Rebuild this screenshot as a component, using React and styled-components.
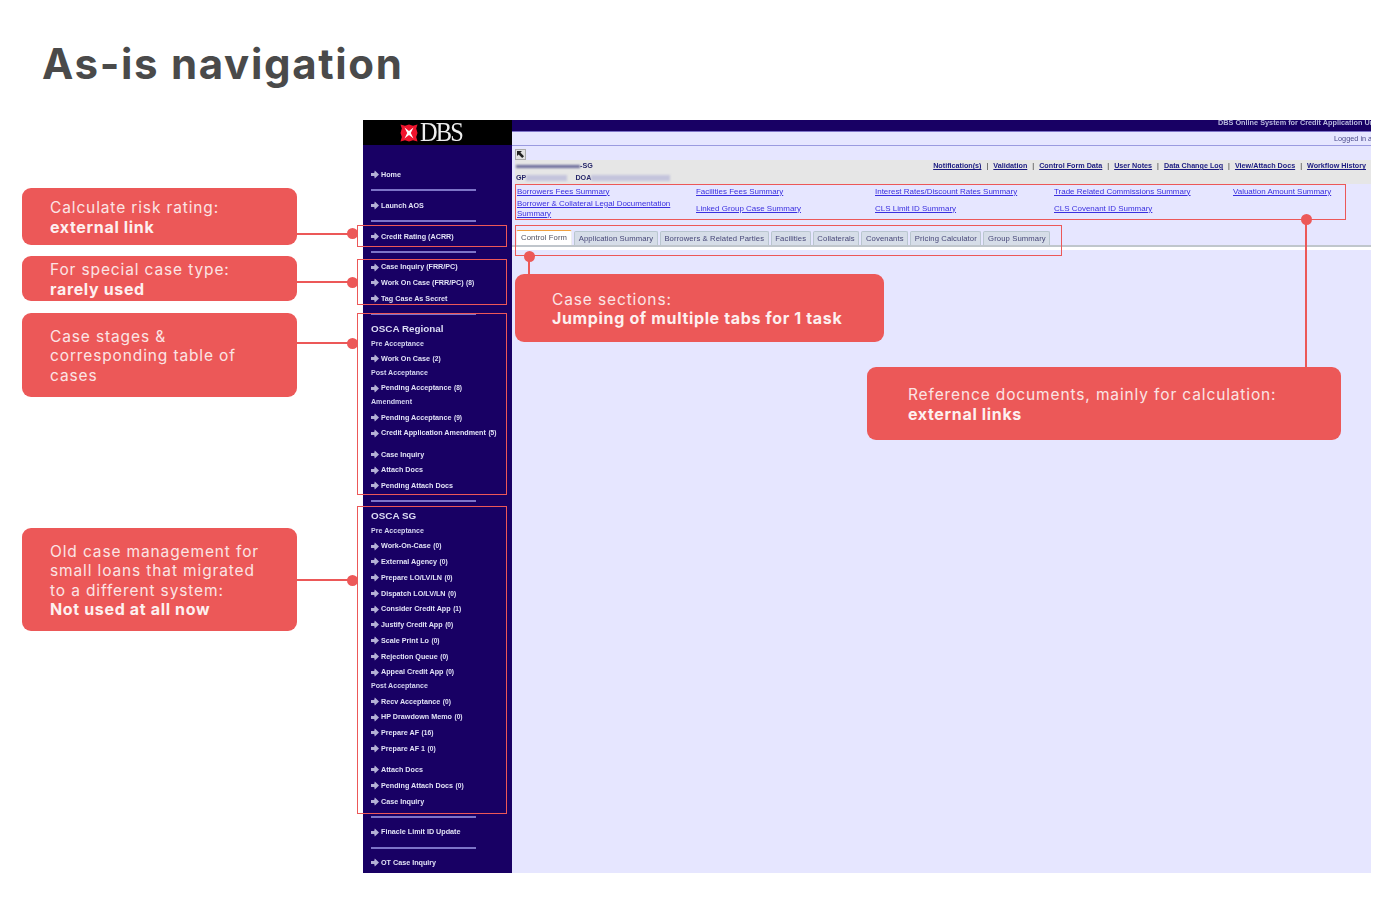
import React from "react";
import styled, { createGlobalStyle } from "styled-components";

const RED = "#ec5858";
const NAVY = "#180064";
const LAV = "#e6e6ff";

const Global = createGlobalStyle`
  html, body { margin: 0; padding: 0; background: #fff; }
  body { width: 1400px; height: 900px; overflow: hidden; font-family: Inter, "Liberation Sans", sans-serif; }
`;

const Page = styled.div`
  width: 1400px;
  height: 900px;
  position: relative;
  background: #fff;
`;
const Title = styled.h1`
  margin: 0;
  padding: 36px 0 0 42px;
  height: 120px;
  box-sizing: border-box;
  font: 700 42px/55px Inter, sans-serif;
  letter-spacing: 1.67px;
  color: #4a4a4a;
`;
const Body = styled.div`
  display: flex;
  align-items: flex-start;
  padding-left: 22px;
`;
const Notes = styled.div`
  width: 341px;
  flex: none;
  display: flex;
  flex-direction: column;
  padding-top: 68px;
`;
const Callout = styled.div`
  position: relative;
  box-sizing: border-box;
  width: 275px;
  height: ${(p) => p.$h}px;
  margin-top: ${(p) => p.$mt || 0}px;
  padding: 2px 0 0 28px;
  display: flex;
  align-items: center;
  background: ${RED};
  border-radius: 9px;
  color: #fbe4e4;
  font: 400 15.5px/19.5px Inter, sans-serif;
  letter-spacing: 0.87px;
  b { font-weight: 700; font-size: 16px; color: #fdf0f0; letter-spacing: 0.65px; }
`;
const Connector = styled.i`
  position: absolute;
  left: 100%;
  top: ${(p) => p.$y}px;
  width: 61px;
  height: 2px;
  background: ${RED};
  &::after {
    content: "";
    position: absolute;
    right: 0;
    top: -4.5px;
    width: 11px;
    height: 11px;
    border-radius: 50%;
    background: ${RED};
  }
`;
const Stage = styled.div`
  position: relative;
  width: 1008px;
  height: 753px;
  flex: none;
`;
const Shot = styled.div`
  width: 100%;
  height: 100%;
  display: flex;
  overflow: hidden;
  background: ${LAV};
  filter: blur(0.5px);
  font-family: "Liberation Sans", Arial, sans-serif;
`;
const Side = styled.nav`
  width: 149px;
  flex: none;
  background: ${NAVY};
  display: flex;
  flex-direction: column;
`;
const Brand = styled.div`
  height: 25px;
  background: #000;
  display: flex;
  align-items: center;
  padding-left: 37px;
  gap: 2px;
  flex: none;
`;
const BrandText = styled.span`
  font: 400 26.5px/25px "Liberation Serif", serif;
  letter-spacing: -2px;
  color: #eee;
  transform: scaleX(0.92);
  transform-origin: left center;
`;
const Menu = styled.div`
  padding: 22px 0 0 8px;
  display: flex;
  flex-direction: column;
`;
const Item = styled.div`
  height: 15.75px;
  display: flex;
  align-items: center;
  gap: 2px;
  font: 700 7.2px/15.75px "Liberation Sans", Arial, sans-serif;
  color: #e2e2f6;
  white-space: nowrap;
  margin-top: ${(p) => p.$gap || 0}px;
  svg { flex: none; }
  small { font-size: 6.6px; font-weight: 700; margin-left: 0.5px; }
`;
const Rule = styled.div`
  width: 105px;
  height: 2px;
  margin: 6.5px 0 6.5px;
  background: #7d74c8;
`;
const Section = styled.div`
  height: 17.5px;
  margin-top: -1.5px;
  font: 700 9.9px/17px "Liberation Sans", Arial, sans-serif;
  color: #dcdcf4;
`;
const Stage2 = styled.div`
  height: 13.5px;
  font: 700 7.1px/13.5px "Liberation Sans", Arial, sans-serif;
  color: #d4d4f0;
`;
const Main = styled.main`
  flex: 1;
  min-width: 0;
  display: flex;
  flex-direction: column;
`;
const TopBar = styled.div`
  height: 11px;
  background: ${NAVY};
  padding-left: 706px;
  font: 700 7.3px/5px "Liberation Sans", Arial, sans-serif;
  color: #b8b8dc;
  white-space: nowrap;
  overflow: hidden;
  border-bottom: 1px solid #7d74c8;
  flex: none;
`;
const LoginBar = styled.div`
  height: 13px;
  padding-left: 822px;
  font: 400 7.3px/13px "Liberation Sans", Arial, sans-serif;
  color: #4a4a8a;
  white-space: nowrap;
  border-bottom: 1px solid #9a9ae0;
  flex: none;
`;
const ExpandRow = styled.div`
  height: 14px;
  padding: 3px 0 0 3px;
  box-sizing: border-box;
  flex: none;
`;
const ExpandBtn = styled.span`
  display: block;
  width: 11px;
  height: 11px;
  background: #e2e2e2;
  border: 1px solid #aaa;
  box-sizing: border-box;
  svg { display: block; }
`;
const Grey = styled.div`
  margin-left: 3px;
  height: 24px;
  background: #e6e6e6;
  flex: none;
  display: grid;
  grid-template-rows: 12px 12px;
  box-sizing: border-box;
`;
const GreyRow = styled.div`
  display: flex;
  align-items: center;
  padding: 0 5px 0 1px;
  font: 700 7.2px/12px "Liberation Sans", Arial, sans-serif;
  color: #27276a;
  white-space: nowrap;
`;
const Redact = styled.span`
  display: inline-block;
  width: ${(p) => p.$w}px;
  height: ${(p) => p.$h || 6}px;
  background: ${(p) => p.$c || "#c4c4dc"};
  filter: blur(1px);
  flex: none;
`;
const DoaGap = styled.span`
  width: 8px;
  flex: none;
`;
const TopLinks = styled.div`
  margin-left: auto;
  display: flex;
  gap: 5px;
  a { color: #1a1a80; text-decoration: underline; }
  span { font-weight: 400; color: #222; }
`;
const DocGrid = styled.div`
  margin: 1px 0 0 5px;
  height: 34px;
  flex: none;
  display: grid;
  grid-template-columns: repeat(5, 179px);
  grid-template-rows: 13px 21px;
  align-items: center;
  font: 400 7.97px/10px "Liberation Sans", Arial, sans-serif;
`;
const DocLink = styled.a`
  color: #3a2fe0;
  text-decoration: underline;
  max-width: 165px;
`;
const Tabs = styled.div`
  margin: 12px 0 0 4px;
  height: 14px;
  flex: none;
  display: flex;
  gap: 2px;
  align-items: flex-end;
`;
const Tab = styled.div`
  height: ${(p) => (p.$on ? 15 : 14)}px;
  box-sizing: border-box;
  padding: 0 ${(p) => (p.$on ? 4 : 3.6)}px;
  display: flex;
  align-items: center;
  border-radius: 2px 2px 0 0;
  background: ${(p) => (p.$on ? "#fff" : "#d6dde8")};
  border: 1px solid ${(p) => (p.$on ? "#eee" : "#b9c6cf")};
  border-top: ${(p) => (p.$on ? "1.5px solid #f0a040" : "1px solid #b9c6cf")};
  border-bottom: 0;
  font: 400 7.7px/12px "Liberation Sans", Arial, sans-serif;
  letter-spacing: 0.1px;
  color: ${(p) => (p.$on ? "#505060" : "#474778")};
  white-space: nowrap;
`;
const TabLine = styled.div`
  height: 2px;
  background: #c0c6cc;
  flex: none;
`;
const WhiteStrip = styled.div`
  height: 3px;
  background: #fff;
  flex: none;
`;
const Outline = styled.div`
  position: absolute;
  left: ${(p) => p.$l}px;
  top: ${(p) => p.$t}px;
  width: ${(p) => p.$w}px;
  height: ${(p) => p.$h}px;
  box-sizing: border-box;
  border: 1px solid ${RED};
  pointer-events: none;
`;
const FloatNote = styled(Callout)`
  position: absolute;
  left: ${(p) => p.$l}px;
  top: ${(p) => p.$t}px;
  width: ${(p) => p.$w}px;
  padding-left: ${(p) => p.$pl}px;
`;
const Leader = styled.i`
  position: absolute;
  left: ${(p) => p.$l}px;
  top: ${(p) => p.$t}px;
  width: 2px;
  height: ${(p) => p.$h}px;
  background: ${RED};
  &::before {
    content: "";
    position: absolute;
    left: -4.5px;
    top: -5px;
    width: 11px;
    height: 11px;
    border-radius: 50%;
    background: ${RED};
  }
`;

const Arrow = () => (
  <svg width="8" height="9" viewBox="0 0 8 9">
    <path d="M3.8.4 8 4.5 3.8 8.6 3.2 6H0V3h3.2z" fill="#b4b0d6" />
  </svg>
);
const DbsMark = () => (
  <svg width="18" height="20" viewBox="0 0 18 20">
    <path d="M.5 1.5 5 2.8 9 1.5l4 1.3 4.5-1.3-1.3 4 1.3 4.5-1.3 4 1.3 4.5-4.5-1.3-4 1.3-4-1.3-4.5 1.3 1.3-4.5-1.3-4 1.3-4.5z" fill="#f0142d" />
    <path d="M4.5 4.5 9 8l4.5-3.5L10.8 10l2.7 5.5L9 12l-4.5 3.5L7.2 10z" fill="#fff" />
  </svg>
);
const Entry = ({ children, n, gap }) => (
  <Item $gap={gap}>
    <Arrow />
    <span>{children}</span>
    {n !== undefined && <small>({n})</small>}
  </Item>
);

const topLinks = ["Notification(s)", "Validation", "Control Form Data", "User Notes", "Data Change Log", "View/Attach Docs", "Workflow History"];
const docs = [
  "Borrowers Fees Summary", "Facilities Fees Summary", "Interest Rates/Discount Rates Summary", "Trade Related Commissions Summary", "Valuation Amount Summary",
  "Borrower & Collateral Legal Documentation Summary", "Linked Group Case Summary", "CLS Limit ID Summary", "CLS Covenant ID Summary",
];
const tabs = ["Control Form", "Application Summary", "Borrowers & Related Parties", "Facilities", "Collaterals", "Covenants", "Pricing Calculator", "Group Summary"];

export default function App() {
  return (
    <Page>
      <Global />
      <Title>As-is navigation</Title>
      <Body>
        <Notes>
          <Callout $h={57}>
            <div>Calculate risk rating:<br /><b>external link</b></div>
            <Connector $y={44.5} />
          </Callout>
          <Callout $h={45} $mt={11}>
            <div>For special case type:<br /><b>rarely used</b></div>
            <Connector $y={25} />
          </Callout>
          <Callout $h={84} $mt={12}>
            <div>Case stages &amp;<br />corresponding table of<br />cases</div>
            <Connector $y={29} />
          </Callout>
          <Callout $h={103} $mt={131}>
            <div>Old case management for<br />small loans that migrated<br />to a different system:<br /><b>Not used at all now</b></div>
            <Connector $y={51} />
          </Callout>
        </Notes>
        <Stage>
          <Shot>
            <Side>
              <Brand>
                <DbsMark />
                <BrandText>DBS</BrandText>
              </Brand>
              <Menu>
                <Entry>Home</Entry>
                <Rule />
                <Entry>Launch AOS</Entry>
                <Rule />
                <Entry>Credit Rating (ACRR)</Entry>
                <Rule />
                <Entry>Case Inquiry (FRR/PC)</Entry>
                <Entry n={8}>Work On Case (FRR/PC)</Entry>
                <Entry>Tag Case As Secret</Entry>
                <Rule />
                <Section>OSCA Regional</Section>
                <Stage2>Pre Acceptance</Stage2>
                <Entry n={2}>Work On Case</Entry>
                <Stage2>Post Acceptance</Stage2>
                <Entry n={8}>Pending Acceptance</Entry>
                <Stage2>Amendment</Stage2>
                <Entry n={9}>Pending Acceptance</Entry>
                <Entry n={5}>Credit Application Amendment</Entry>
                <Entry gap={5.5}>Case Inquiry</Entry>
                <Entry>Attach Docs</Entry>
                <Entry>Pending Attach Docs</Entry>
                <Rule />
                <Section>OSCA SG</Section>
                <Stage2>Pre Acceptance</Stage2>
                <Entry n={0}>Work-On-Case</Entry>
                <Entry n={0}>External Agency</Entry>
                <Entry n={0}>Prepare LO/LV/LN</Entry>
                <Entry n={0}>Dispatch LO/LV/LN</Entry>
                <Entry n={1}>Consider Credit App</Entry>
                <Entry n={0}>Justify Credit App</Entry>
                <Entry n={0}>Scale Print Lo</Entry>
                <Entry n={0}>Rejection Queue</Entry>
                <Entry n={0}>Appeal Credit App</Entry>
                <Stage2>Post Acceptance</Stage2>
                <Entry n={0}>Recv Acceptance</Entry>
                <Entry n={0}>HP Drawdown Memo</Entry>
                <Entry n={16}>Prepare AF</Entry>
                <Entry n={0}>Prepare AF 1</Entry>
                <Entry gap={5.5}>Attach Docs</Entry>
                <Entry n={0}>Pending Attach Docs</Entry>
                <Entry>Case Inquiry</Entry>
                <Rule />
                <Entry>Finacle Limit ID Update</Entry>
                <Rule />
                <Entry>OT Case Inquiry</Entry>
              </Menu>
            </Side>
            <Main>
              <TopBar>DBS Online System for Credit Application Underwriting</TopBar>
              <LoginBar>Logged in as</LoginBar>
              <ExpandRow>
                <ExpandBtn>
                  <svg width="9" height="9" viewBox="0 0 9 9">
                    <path d="M1 1h5L4.4 2.6 8 6.2 6.2 8 2.6 4.4 1 6z" fill="#222" />
                  </svg>
                </ExpandBtn>
              </ExpandRow>
              <Grey>
                <GreyRow>
                  <Redact $w={64} $h={3} $c="#6a6a9a" />-SG
                  <TopLinks>
                    {topLinks.map((l, i) => (
                      <React.Fragment key={l}>
                        {i > 0 && <span>|</span>}
                        <a>{l}</a>
                      </React.Fragment>
                    ))}
                  </TopLinks>
                </GreyRow>
                <GreyRow>
                  GP<Redact $w={41} />
                  <DoaGap />DOA<Redact $w={79} />
                </GreyRow>
              </Grey>
              <DocGrid>
                {docs.map((d) => (
                  <DocLink key={d}>{d}</DocLink>
                ))}
              </DocGrid>
              <Tabs>
                {tabs.map((t, i) => (
                  <Tab key={t} $on={i === 0}>{t}</Tab>
                ))}
              </Tabs>
              <TabLine />
              <WhiteStrip />
            </Main>
          </Shot>
          <Outline $l={-6} $t={105} $w={150} $h={22} />
          <Outline $l={-6} $t={139} $w={150} $h={46} />
          <Outline $l={-6} $t={193} $w={150} $h={182} />
          <Outline $l={-6} $t={386} $w={150} $h={308} />
          <Outline $l={152} $t={64} $w={831} $h={36} />
          <Outline $l={152} $t={105} $w={547} $h={31} />
          <Leader $l={165} $t={136} $h={18} />
          <Leader $l={942} $t={99} $h={148} />
          <FloatNote $l={152} $t={154} $w={369} $h={68} $pl={37}>
            <div>Case sections:<br /><b>Jumping of multiple tabs for 1 task</b></div>
          </FloatNote>
          <FloatNote $l={504} $t={247} $w={474} $h={73} $pl={41}>
            <div>Reference documents, mainly for calculation:<br /><b>external links</b></div>
          </FloatNote>
        </Stage>
      </Body>
    </Page>
  );
}
